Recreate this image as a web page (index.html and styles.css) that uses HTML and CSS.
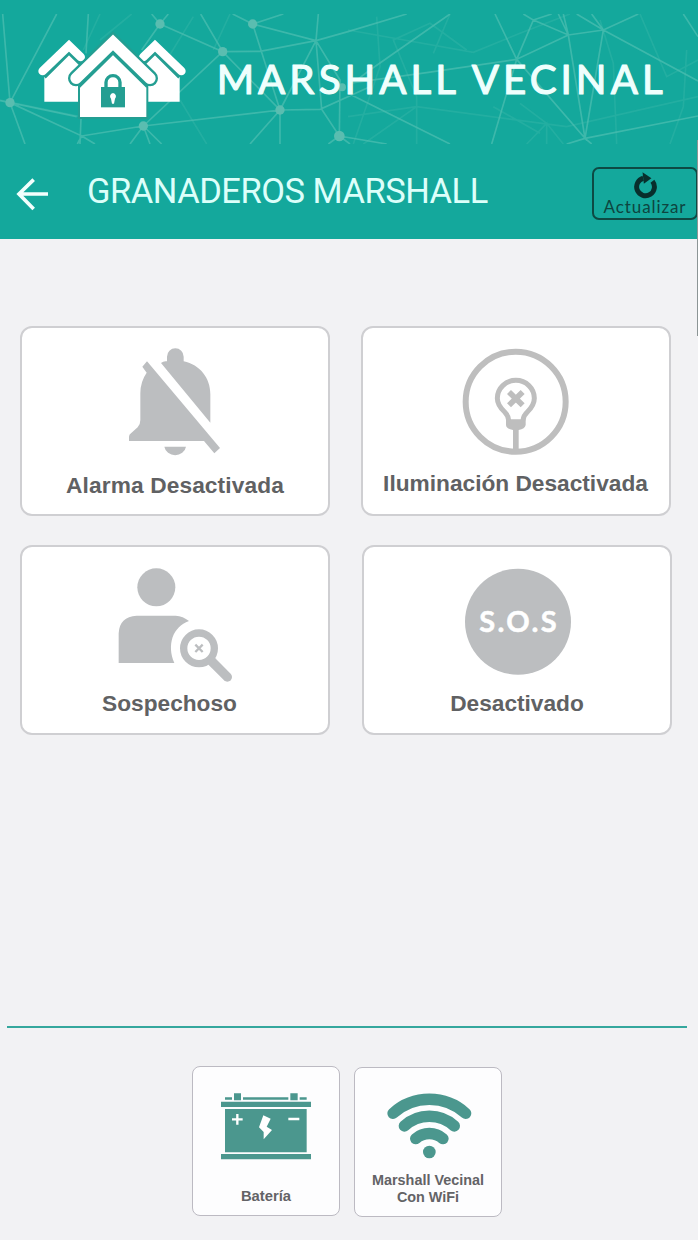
FILE: index.html
```html
<!DOCTYPE html>
<html lang="es">
<head>
<meta charset="utf-8">
<title>Marshall Vecinal</title>
<link rel="stylesheet" href="styles.css">
</head>
<body>
<header class="header">
  <div class="banner">
    <svg class="banner-art" viewBox="0 42 2094 390" aria-label="Marshall Vecinal">
      <g class="mesh faint">
        <path d="M300 42L250 150M395 42L300 120M580 50L500 180M540 300L620 432M690 42L640 150M0 300L240 350M1044 90L1420 157L1560 100L1710 42M1130 50L1140 200L1060 432M1250 320L1700 380L2094 290M1250 432V290L1180 120L1290 70L1400 150M1640 432V370L1580 432M1690 432L1640 370L1560 310M1800 60L1840 190L1850 432M1920 42L2000 230L2094 180M2060 150L2050 320L2010 432M1350 42L1300 160M1044 350L1250 320L1090 432M1480 320L1620 400"/>
      </g>
      <g class="mesh">
        <path d="M8 42L30 308L170 42M30 308L75 432M0 302L30 308L245 408L430 378L840 330L960 328L1110 260M30 308L230 350M240 432L243 355M232 432L245 408L285 432M265 42L258 160M480 72L455 42M480 72L505 42M480 72L425 150M480 72L668 155L840 330L750 432M840 330V432M602 42L668 155L430 378L390 432M430 378L450 432M430 378L485 432M668 155L780 154L948 122L1044 95L1220 42M758 72L698 42M758 72L850 42M758 72L948 122L955 42M758 72L840 330M948 122L840 330M948 122L1020 240L1018 408M948 122L965 328L1018 408L985 432M1018 408L1050 432M1044 280L1350 432M1018 408L1160 432M1350 42L1110 210L1044 260M1044 250L1280 218L1550 178L1485 42M1550 178L1600 60L1570 42M1600 60L1655 42M1600 60L1705 105L1810 90L1915 42M1705 105L1550 178L1475 432M1705 105L1675 42M1705 105L1690 42M1550 178L1755 415L1705 105M1755 415L1810 90L1775 42M1810 90L1730 42M1810 90L2094 243M1755 415L1700 432M1755 415L1775 432M1755 415L2094 348M2050 42L2094 110"/>
        <g class="nodes"><circle cx="30" cy="308" r="14"/><circle cx="480" cy="72" r="14"/><circle cx="668" cy="155" r="14"/><circle cx="758" cy="72" r="14"/><circle cx="430" cy="378" r="14"/><circle cx="840" cy="330" r="14"/><circle cx="1018" cy="408" r="16"/><circle cx="1026" cy="262" r="12"/></g>
      </g>
      <g transform="translate(90 75)">
        <g id="side-house">
          <path class="fill-white" d="M43 156L117 84L160 126V230H43Z"/>
          <path class="roof-gap" d="M43 156L117 83L160 125"/>
          <path class="roof" d="M38 138L117 62L152 96"/>
        </g>
        <use href="#side-house" transform="translate(492 0) scale(-1 1)"/>
        <path class="roof outline" d="M138 160L249 52L360 160"/>
        <path class="house" d="M150 184L249 86L349 184V276H150Z"/>
        <path class="roof-gap" d="M146 184L249 82L353 184"/>
        <path class="roof main" d="M138 160L249 52L360 160"/>
        <rect class="lock" x="213" y="186" width="72" height="61"/>
        <path class="shackle" d="M228 190V172a21 20 0 0 1 42 0V190"/>
        <path class="fill-white" d="M249 204a10 10 0 0 1 6 17l-3 15h-6l-3-15a10 10 0 0 1 6-17Z"/>
      </g>
      <text class="brand" x="650" y="283" textLength="1350" lengthAdjust="spacingAndGlyphs">MARSHALL VECINAL</text>
    </svg>
  </div>
  <div class="bar">
    <svg class="back" viewBox="48 534 99 99"><path d="M144 582H57M101 539L57 582L101 627"/></svg>
    <h1 class="title">GRANADEROS MARSHALL</h1>
    <button class="refresh">
      <svg class="refresh-icon" viewBox="850 518 82 82"><path class="ring" d="M912 546A27 27 0 1 1 884 537"/><path d="M882 519L909 537L886 554Z"/></svg>
      <span>Actualizar</span>
    </button>
  </div>
</header>
<main class="main">
  <section class="grid">
    <div class="row">
      <div class="card alarm">
        <svg class="icon" viewBox="36 24 918 405">
          <path d="M411 124L630 384L613 400L582 363H357V350Q357 344 363 340L383 322Q391 314 391 300V220Q391 185 410 158L397 140ZM453 129Q461 122 471 124V110A25 25 0 0 1 521 110V124C570 134 601 175 601 222V308ZM463 380H528A33 31 0 0 1 463 380Z"/>
        </svg>
        <div class="label">Alarma Desactivada</div>
      </div>
      <div class="card light">
        <svg class="icon" viewBox="39 24 918 405">
          <circle class="line" cx="497" cy="245" r="150" stroke-width="18"/>
          <path class="line" stroke-width="15" d="M476 301Q475 287 464 276Q442 256 442 235A55.500 54 0 0 1 553 235Q553 256 532 276Q520 287 519 301"/>
          <path d="M468 298H527V315Q525 327 506 330V392H489V330Q469 327 468 315Z"/>
          <path class="line" stroke-width="17" d="M477 216L518 256M518 216L477 256"/>
        </svg>
        <div class="label">Iluminación Desactivada</div>
      </div>
    </div>
    <div class="row second">
      <div class="card suspect">
        <svg class="icon" viewBox="36 21 918 405">
          <circle cx="439" cy="142" r="57"/>
          <path d="M326 369V280Q328 230 380 227H497Q519 228 537 243C488 260 470 315 493 369Z"/>
          <circle class="line" cx="567" cy="325" r="46" stroke-width="22"/>
          <path class="line round" stroke-width="28" d="M606 365L652 411"/>
          <path class="line" stroke-width="7" d="M556 314L578 336M578 314L556 336"/>
        </svg>
        <div class="label">Sospechoso</div>
      </div>
      <div class="card">
        <svg class="icon" viewBox="42 21 918 405">
          <circle cx="504" cy="245" r="159"/>
          <text class="sos" x="388" y="276" textLength="232">S.O.S</text>
        </svg>
        <div class="label">Desactivado</div>
      </div>
    </div>
  </section>
  <footer class="footer">
    <div class="mini battery">
      <svg class="mini-icon" viewBox="39 171 438 300">
        <path d="M123 275H393V291H123ZM135 297H380V427H135ZM123 432H393V448H123ZM162 250H183V271H162ZM331 250H353V271H331ZM135 262H156V269H135ZM189 262H325V269H189ZM359 262H380V269H359Z"/>
        <path class="mark" d="M156 328H188M172 312V344M325 327H358"/>
        <path class="fill-white" d="M250 316L272 326L260 350L276 360L251 388V366L237 352Z"/>
      </svg>
      <div class="mini-label">Batería</div>
    </div>
    <div class="mini wifi">
      <svg class="mini-icon" viewBox="526 174 438 300">
        <path class="wave" d="M640 310A162 162 0 0 1 858 310M674 348A111 111 0 0 1 824 348M708 386A62 62 0 0 1 790 386"/>
        <circle cx="749" cy="426" r="19"/>
      </svg>
      <div class="mini-label">Marshall Vecinal<br>Con WiFi</div>
    </div>
  </footer>
</main>
<div class="scroll-edge"></div>
</body>
</html>
```
FILE: styles.css
```css
* { box-sizing: border-box; }
body {
  margin: 0;
  width: 698px;
  height: 1240px;
  overflow: hidden;
  background: #f2f2f4;
  font-family: "Liberation Sans", Arial, sans-serif;
}
svg { display: block; flex: none; }

.header { height: 239px; padding-top: 14px; background: #14a89c; }
.banner { height: 130px; }
.banner-art { width: 698px; height: 130px; }
.mesh { fill: none; stroke: #4bbdb0; stroke-width: 5; stroke-opacity: .75; }
.mesh.faint { stroke-opacity: .28; }
.nodes { fill: #5abdb0; stroke: none; }
.fill-white { fill: #fff; }
.roof { fill: none; stroke: #fff; stroke-width: 26; stroke-linecap: round; }
.roof.main { stroke-width: 34; }
.roof.outline { stroke: #249e92; stroke-width: 48; }
.roof-gap { fill: none; stroke: #249e92; stroke-width: 12; }
.house { fill: #fff; stroke: #249e92; stroke-width: 12; paint-order: stroke; }
.lock { fill: #249e92; }
.shackle { fill: none; stroke: #249e92; stroke-width: 10; }
.brand {
  font: 400 120px Lato, sans-serif;
  letter-spacing: 12px;
  fill: #effffd;
  stroke: #effffd;
  stroke-width: 3.500;
  stroke-linejoin: round;
}

.bar { display: flex; height: 95px; padding-left: 16px; }
.back { width: 33px; height: 33px; margin-top: 34px; fill: none; stroke: #f2fffd; stroke-width: 11; }
.title {
  width: 404px;
  margin: 27px 0 0 38px;
  font: 400 34.500px/40px Roboto, sans-serif;
  letter-spacing: -.5px;
  white-space: nowrap;
  color: #dcfffa;
}
.refresh {
  display: flex;
  flex-direction: column;
  align-items: center;
  width: 106px;
  height: 53px;
  margin: 23px 0 0 101px;
  padding: 3px 0 0;
  border: 2px solid #0d4a44;
  border-radius: 7px;
  background: none;
  font: 400 17px/15px Lato, sans-serif;
  letter-spacing: .9px;
  color: #0d4540;
}
.refresh-icon { width: 27px; height: 27px; fill: #082f2c; }
.ring { fill: none; stroke: #082f2c; stroke-width: 15; }

.main { padding: 87px 0 0; }
.grid { display: flex; flex-direction: column; gap: 29px; height: 700px; padding-left: 20px; }
.row { display: flex; gap: 31px; }
.second { gap: 32px; }
.card {
  width: 310px;
  height: 190px;
  border: 2px solid #cfcfd2;
  border-radius: 12px;
  background: #fff;
}
.icon { width: 306px; height: 135px; fill: #bcbec0; }
.line { fill: none; stroke: #bcbec0; }
.light .icon { fill: #bebebe; }
.light .line { stroke: #bebebe; }
.round { stroke-linecap: round; }
.sos { font: 700 87px Lato, sans-serif; fill: #fff; stroke: #fff; stroke-width: 1.500; }
.label {
  margin-top: 8px;
  font-size: 22.700px;
  font-weight: 700;
  line-height: 26px;
  text-align: center;
  white-space: nowrap;
  color: #606163;
}
.alarm .label { margin-top: 9px; letter-spacing: .12px; }
.light .label { margin-top: 7px; padding-right: 1px; }
.suspect .label { padding-right: 11px; }

.footer {
  display: flex;
  gap: 14px;
  width: 680px;
  height: 192px;
  margin-left: 7px;
  padding: 38px 0 0 185px;
  border-top: 2px solid #35a79d;
}
.mini {
  width: 148px;
  height: 150px;
  border: 1px solid #bcbac2;
  border-radius: 8px;
  background: #fdfdfe;
}
.wifi { margin-top: 1px; }
.mini-icon { width: 146px; height: 100px; fill: #4b978e; }
.mark { fill: none; stroke: #fff; stroke-width: 7; }
.wave { fill: none; stroke: #4b978e; stroke-width: 34; stroke-linecap: round; }
.mini-label {
  margin-top: 4px;
  font-size: 14.400px;
  font-weight: 700;
  line-height: 17px;
  text-align: center;
  color: #636366;
}
.battery .mini-label { margin-top: 21px; font-size: 14.800px; }

.scroll-edge {
  position: absolute;
  top: 140px;
  left: 697px;
  width: 1px;
  height: 196px;
  background: #8c9595;
}
```
